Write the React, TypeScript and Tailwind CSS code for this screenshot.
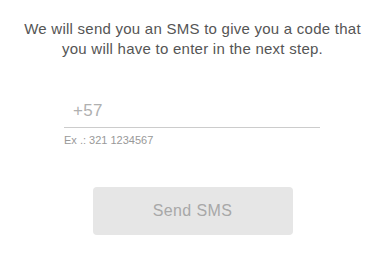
export default function App() {
  return (
    <div
      className="w-[385px] h-[256px] bg-white flex flex-col items-center"
      style={{ fontFamily: '"Liberation Sans", Arial, sans-serif' }}
    >
      <p className="mt-[19px] text-center text-[15px] leading-[20px] tracking-[0.25px] text-[#555555]">
        We will send you an SMS to give you a code that
        <br />
        you will have to enter in the next step.
      </p>

      <div className="mt-[38px] w-[256px] self-start ml-[64px]">
        <input
          type="text"
          placeholder="+57"
          className="w-full h-[31px] px-[9px] pb-[2px] text-[17px] tracking-[0.3px] text-[#444] placeholder:text-[#b0b0b0] border-b border-[#cccccc] outline-none bg-transparent"
        />
        <p className="mt-[6px] text-[11px] leading-[12px] text-[#999999]">Ex .: 321 1234567</p>
      </div>

      <button
        type="button"
        className="mt-[41px] w-[200px] h-[48px] rounded-[4px] bg-[#e6e6e6] text-[16px] tracking-[0.4px] text-[#a8a8a8]"
      >
        Send SMS
      </button>
    </div>
  );
}
